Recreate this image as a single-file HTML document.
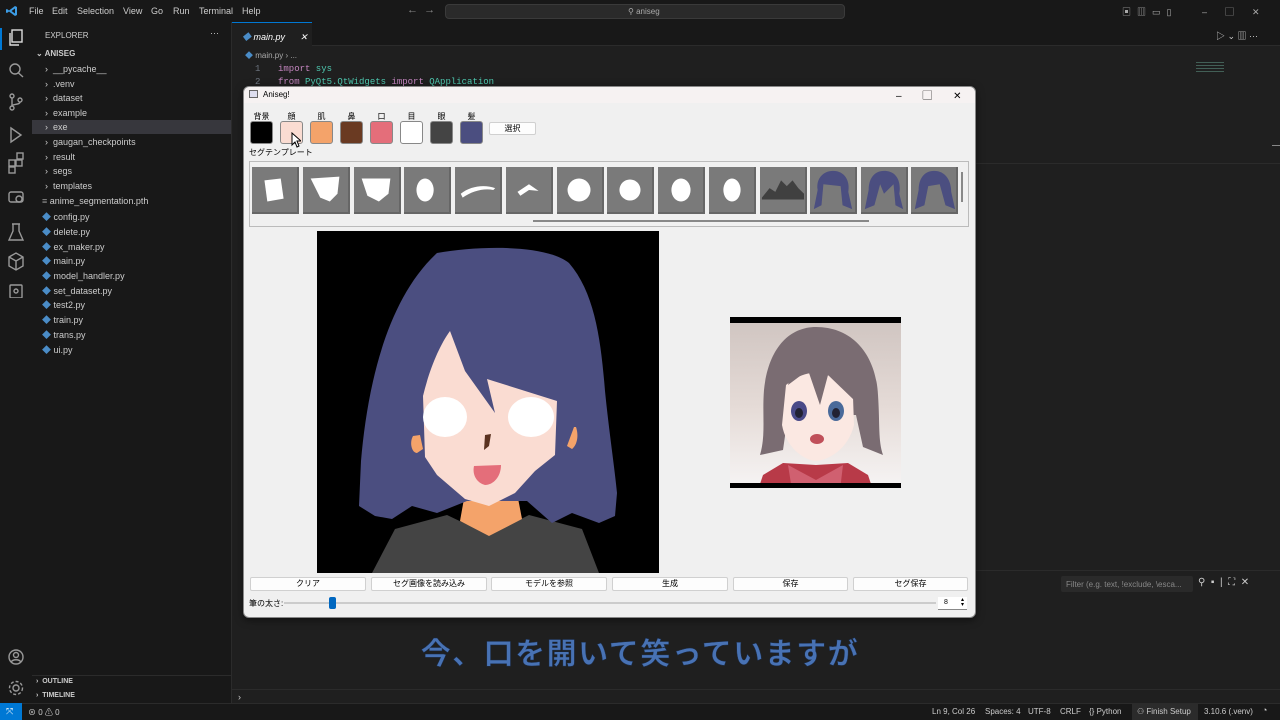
<!DOCTYPE html>
<html><head><meta charset="utf-8"><style>
*{margin:0;padding:0;box-sizing:border-box}
body{width:1280px;height:720px;overflow:hidden;background:#1f1f1f;font-family:"Liberation Sans","Noto Sans CJK JP",sans-serif;position:relative;color:#ccc}
.a{position:absolute}
.t{font-size:9px;color:#cccccc;white-space:nowrap}
.tree div{position:absolute;left:0;font-size:9px;color:#cccccc;white-space:nowrap}
.sw{position:absolute;top:121px;width:23px;height:23px;border-radius:3px;border:1px solid #888}
.lb{position:absolute;top:111px;font-size:8px;color:#000;width:23px;text-align:center}
.th{position:absolute;top:167px;width:47px;height:47px;background:#7a7a7a;border-right:2px solid #666;border-bottom:2px solid #666}
.btn{position:absolute;top:577px;height:14px;background:#fdfdfd;border:1px solid #d0d0d0;border-radius:2px;font-size:8px;color:#000;text-align:center;line-height:12px}
.st{position:absolute;top:707px;font-size:8px;color:#ccc;white-space:nowrap}
</style></head><body>
<div class="a" style="left:0;top:0;width:1280px;height:22px;background:#181818"></div>
<svg class="a" style="left:6px;top:5px" width="12" height="12" viewBox="0 0 12 12"><path d="M9 1 L11 2 V10 L9 11 L3 6.5 L1 8 L0 7.5 V4.5 L1 4 L3 5.5 Z M9 3.5 L5.5 6 L9 8.5Z" fill="#3c9de6"/></svg>
<div class="a t" style="left:29px;top:6px">File</div>
<div class="a t" style="left:52px;top:6px">Edit</div>
<div class="a t" style="left:77px;top:6px">Selection</div>
<div class="a t" style="left:123px;top:6px">View</div>
<div class="a t" style="left:151px;top:6px">Go</div>
<div class="a t" style="left:173px;top:6px">Run</div>
<div class="a t" style="left:199px;top:6px">Terminal</div>
<div class="a t" style="left:242px;top:6px">Help</div>
<div class="a t" style="left:407px;top:4px;font-size:11px;color:#888">← &nbsp;→</div>
<div class="a" style="left:445px;top:4px;width:400px;height:15px;background:#2a2a2a;border:1px solid #3a3a3a;border-radius:4px"></div>
<div class="a t" style="left:628px;top:7px;font-size:8px;color:#aaa">⚲ aniseg</div>
<div class="a t" style="left:1122px;top:5px;color:#aaa;letter-spacing:6px">▣▥▭▯</div>
<div class="a t" style="left:1202px;top:5px;color:#aaa;letter-spacing:18px">–▢✕</div>
<div class="a" style="left:0;top:22px;width:32px;height:681px;background:#181818"></div>
<div class="a" style="left:0;top:28px;width:2px;height:22px;background:#0078d4"></div>
<svg class="a" style="left:7px;top:28px" width="18" height="270" viewBox="0 0 18 270" fill="none" stroke="#999" stroke-width="1.4">
<rect x="5" y="2" width="10" height="12" stroke="#ddd"/><path d="M3 5 V17 H12" stroke="#ddd"/>
<circle cx="8" cy="41" r="5"/><path d="M11.5 45 L16 49"/>
<circle cx="5" cy="68" r="2"/><circle cx="5" cy="80" r="2"/><circle cx="13" cy="72" r="2"/><path d="M5 70V78M13 74C13 77 5 76 5 78"/>
<path d="M4 100 L14 107 L4 114Z"/>
<rect x="2" y="132" width="6" height="6"/><rect x="9" y="132" width="6" height="6"/><rect x="2" y="139" width="6" height="6"/><rect x="10" y="125" width="6" height="6"/>
<rect x="2" y="164" width="14" height="10" rx="2"/><circle cx="12" cy="171" r="3"/>
<path d="M6 196V203L2 212H16L12 203V196M5 196H13"/>
<path d="M2 229L9 225L16 229V238L9 242L2 238Z M2 229L9 233L16 229M9 233V242"/>
<rect x="3" y="257" width="12" height="13" rx="1"/><circle cx="9" cy="263" r="2"/>
</svg>
<svg class="a" style="left:7px;top:648px" width="18" height="50" viewBox="0 0 18 50" fill="none" stroke="#999" stroke-width="1.4"><circle cx="9" cy="9" r="7"/><circle cx="9" cy="7" r="2.5"/><path d="M4 14C6 11 12 11 14 14"/><circle cx="9" cy="40" r="3"/><circle cx="9" cy="40" r="6.5" stroke-dasharray="3 2"/></svg>
<div class="a" style="left:32px;top:22px;width:200px;height:681px;background:#181818;border-right:1px solid #2b2b2b"></div>
<div class="a t" style="left:45px;top:31px;font-size:8px">EXPLORER</div>
<div class="a t" style="left:210px;top:28px">···</div>
<div class="a t" style="left:36px;top:49px;font-size:8px;font-weight:bold">⌄ ANISEG</div>
<div class="a" style="left:32px;top:120px;width:199px;height:14px;background:#37373d"></div>
<div class="tree a" style="left:45px;top:64px;width:180px">
<div style="top:0">›&nbsp; __pycache__</div><div style="top:15px">›&nbsp; .venv</div><div style="top:29px">›&nbsp; dataset</div><div style="top:44px">›&nbsp; example</div><div style="top:58px">›&nbsp; exe</div><div style="top:73px">›&nbsp; gaugan_checkpoints</div><div style="top:88px">›&nbsp; result</div><div style="top:102px">›&nbsp; segs</div><div style="top:117px">›&nbsp; templates</div>
<div style="top:132px;left:-3px"><span style="color:#999">≡</span> anime_segmentation.pth</div>
<div style="top:146px;left:-3px"><span style="color:#4a8cc7">◆</span> config.py</div><div style="top:161px;left:-3px"><span style="color:#4a8cc7">◆</span> delete.py</div><div style="top:176px;left:-3px"><span style="color:#4a8cc7">◆</span> ex_maker.py</div><div style="top:190px;left:-3px"><span style="color:#4a8cc7">◆</span> main.py</div><div style="top:205px;left:-3px"><span style="color:#4a8cc7">◆</span> model_handler.py</div><div style="top:220px;left:-3px"><span style="color:#4a8cc7">◆</span> set_dataset.py</div><div style="top:234px;left:-3px"><span style="color:#4a8cc7">◆</span> test2.py</div><div style="top:249px;left:-3px"><span style="color:#4a8cc7">◆</span> train.py</div><div style="top:264px;left:-3px"><span style="color:#4a8cc7">◆</span> trans.py</div><div style="top:279px;left:-3px"><span style="color:#4a8cc7">◆</span> ui.py</div>
</div>
<div class="a" style="left:32px;top:675px;width:199px;height:1px;background:#2b2b2b"></div>
<div class="a t" style="left:36px;top:678px;font-size:7px;font-weight:bold">›&nbsp; OUTLINE</div>
<div class="a t" style="left:36px;top:692px;font-size:7px;font-weight:bold">›&nbsp; TIMELINE</div>
<div class="a" style="left:232px;top:22px;width:1048px;height:24px;background:#181818;border-bottom:1px solid #2b2b2b"></div>
<div class="a" style="left:232px;top:22px;width:80px;height:24px;background:#1f1f1f;border-top:1px solid #0078d4"></div>
<div class="a t" style="left:242px;top:30px;font-style:italic;color:#fff"><span style="color:#4a8cc7">◆</span> main.py &nbsp;&nbsp;&nbsp;&nbsp;&nbsp;✕</div>
<div class="a t" style="left:1216px;top:29px;color:#ccc">▷ ⌄ ▥ ···</div>
<div class="a t" style="left:245px;top:50px;font-size:8px;color:#aaa"><span style="color:#4a8cc7">◆</span> main.py › ...</div>
<div class="a" style="left:255px;top:63px;font-family:'Liberation Mono',monospace;font-size:9px;line-height:13px;color:#6e7681">1<br>2</div>
<div class="a" style="left:278px;top:63px;font-family:'Liberation Mono',monospace;font-size:9px;line-height:13px;color:#4ec9b0;white-space:nowrap"><span style="color:#c586c0">import</span> sys<br><span style="color:#c586c0">from</span> PyQt5.QtWidgets <span style="color:#c586c0">import</span> QApplication</div>
<div class="a" style="left:1196px;top:62px;width:28px;height:10px;background:repeating-linear-gradient(#5a8a7a 0 1px,transparent 1px 3px);opacity:.6"></div>
<div class="a" style="left:1272px;top:145px;width:8px;height:1px;background:#888"></div>
<div class="a" style="left:975px;top:163px;width:305px;height:1px;background:#2b2b2b"></div>
<div class="a" style="left:975px;top:570px;width:305px;height:1px;background:#2b2b2b"></div>
<div class="a" style="left:1061px;top:576px;width:132px;height:16px;background:#2a2a2a;border-radius:2px"></div>
<div class="a t" style="left:1066px;top:580px;font-size:8px;color:#888">Filter (e.g. text, !exclude, \esca...</div>
<div class="a t" style="left:1198px;top:577px;font-size:10px;color:#ccc">⚲ &nbsp;▪ &nbsp;| &nbsp;⛶ &nbsp;✕</div>
<div class="a" style="left:232px;top:689px;width:1048px;height:1px;background:#2b2b2b"></div>
<div class="a t" style="left:238px;top:692px">›</div>
<div class="a" style="left:0;top:703px;width:1280px;height:17px;background:#181818;border-top:1px solid #2b2b2b"></div>
<div class="a" style="left:0;top:703px;width:22px;height:17px;background:#0078d4"></div>
<div class="a t" style="left:6px;top:706px;color:#fff">⤧</div>
<div class="st" style="left:28px">⊗ 0 ⚠ 0</div>
<div class="st" style="left:932px">Ln 9, Col 26</div>
<div class="st" style="left:985px">Spaces: 4</div>
<div class="st" style="left:1028px">UTF-8</div>
<div class="st" style="left:1060px">CRLF</div>
<div class="st" style="left:1089px">{} Python</div>
<div class="a" style="left:1132px;top:704px;width:66px;height:16px;background:#2b2b2b"></div>
<div class="st" style="left:1137px">⚇ Finish Setup</div>
<div class="st" style="left:1204px">3.10.6 (.venv)</div>
<div class="a t" style="left:1262px;top:705px">◔</div>
<div class="a" style="left:243px;top:86px;width:733px;height:532px;background:#f0f0f0;border:1px solid #888;border-radius:6px;box-shadow:0 2px 8px rgba(0,0,0,.5)"></div>
<div class="a" style="left:244px;top:87px;width:731px;height:16px;background:#f6f2f2;border-radius:6px 6px 0 0"></div>
<div class="a" style="left:249px;top:90px;width:9px;height:8px;border:1px solid #666;background:#dde"></div>
<div class="a" style="left:263px;top:90px;font-size:8px;color:#000">Aniseg!</div>
<div class="a" style="left:896px;top:87px;font-size:10px;color:#000;word-spacing:18px">– ▢ ✕</div>
<div class="lb" style="left:250px">背景</div><div class="lb" style="left:280px">顔</div><div class="lb" style="left:310px">肌</div><div class="lb" style="left:340px">鼻</div><div class="lb" style="left:370px">口</div><div class="lb" style="left:400px">目</div><div class="lb" style="left:430px">眼</div><div class="lb" style="left:460px">髪</div>
<div class="sw" style="left:250px;background:#000"></div>
<div class="sw" style="left:280px;background:#fadcd2"></div>
<div class="sw" style="left:310px;background:#f4a36a"></div>
<div class="sw" style="left:340px;background:#6a3a22"></div>
<div class="sw" style="left:370px;background:#e46e7a"></div>
<div class="sw" style="left:400px;background:#fff"></div>
<div class="sw" style="left:430px;background:#444"></div>
<div class="sw" style="left:460px;background:#4b4e80"></div>
<div class="btn" style="left:489px;top:122px;width:47px;height:13px">選択</div>
<svg class="a" style="left:291px;top:132px" width="10" height="16" viewBox="0 0 10 16"><path d="M1 1V13L4 10L6 15L8 14L6 9H10Z" fill="#fff" stroke="#000" stroke-width="1"/></svg>
<div class="a" style="left:249px;top:147px;font-size:8px;color:#000">セグテンプレート</div>
<div class="a" style="left:249px;top:161px;width:720px;height:66px;border:1px solid #bbb;background:#f0f0f0"></div>
<div id="thumbs"></div>
<div class="a" style="left:533px;top:220px;width:336px;height:2px;background:#888"></div>
<div class="a" style="left:961px;top:172px;width:2px;height:30px;background:#888"></div>
<svg class="a" style="left:317px;top:231px" width="342" height="342" viewBox="0 0 342 342">
<rect width="342" height="342" fill="#000"/>
<path d="M55 342 L78 298 L130 284 L172 304 L212 284 L265 298 L282 342Z" fill="#444444"/>
<path d="M148 262 L200 262 L205 288 L172 305 L143 290Z" fill="#f4a36a"/>
<path d="M120 22 C165 14 230 14 252 32 C278 62 284 110 288 160 C292 200 298 240 300 262 L298 285 L282 292 L255 282 L235 292 L210 270 L150 270 L120 282 L95 275 L75 288 L58 285 L42 275 L44 230 C50 160 68 70 120 22Z" fill="#4b4e80"/>
<path d="M96 205 C92 212 95 222 100 222 L106 218 L103 204Z" fill="#f4a36a"/>
<path d="M257 196 L250 215 L255 218 C260 214 262 205 259 196Z" fill="#f4a36a"/>
<path d="M133 100 L148 140 L178 182 L170 148 L240 170 L238 224 L218 240 L198 262 L172 275 L148 268 L120 244 L108 226 L106 165 C112 140 122 115 133 100Z" fill="#fadcd2"/>
<ellipse cx="128" cy="186" rx="22" ry="20" fill="#fff"/>
<ellipse cx="214" cy="186" rx="23" ry="20" fill="#fff"/>
<path d="M168 204 L174 203 L172 215 L167 219Z" fill="#5a3220"/>
<path d="M157 235 L184 234 C184 246 176 254 168 254 C160 252 155 244 157 235Z" fill="#e46e7a"/>
</svg>
<svg class="a" style="left:730px;top:317px" width="171" height="171" viewBox="2 2 171 171">
<defs><linearGradient id="bg" x1="0" y1="0" x2="0" y2="1"><stop offset="0" stop-color="#cfc4c0"/><stop offset=".55" stop-color="#e6dcd8"/><stop offset="1" stop-color="#f6f4f4"/></linearGradient></defs>
<rect x="2" y="2" width="171" height="171" fill="url(#bg)"/>
<rect x="2" y="2" width="171" height="6" fill="#000"/>
<path d="M35 160 L55 148 L88 150 L120 148 L140 160 L145 175 L30 175Z" fill="#b83a48"/>
<path d="M60 150 L88 165 L115 150 L112 175 L64 175Z" fill="#d06070"/>
<path d="M88 12 C125 12 148 40 150 80 C152 110 150 125 155 140 L135 132 L128 100 L60 100 L55 135 L32 140 C38 120 34 100 36 75 C40 35 60 12 88 12Z" fill="#7a6c72"/>
<path d="M58 70 C70 60 85 55 92 60 C104 58 118 68 125 82 L126 110 C120 135 100 145 88 146 C75 145 58 132 54 110Z" fill="#fbe8e2"/>
<path d="M60 70 L80 55 L92 90 L100 60 L126 85 L120 60 L95 45 L65 50Z" fill="#7a6c72"/>
<ellipse cx="71" cy="96" rx="8" ry="10" fill="#4a4a88"/>
<ellipse cx="108" cy="96" rx="8" ry="10" fill="#4a6a9a"/>
<ellipse cx="71" cy="98" rx="4" ry="5" fill="#223"/>
<ellipse cx="108" cy="98" rx="4" ry="5" fill="#223"/>
<ellipse cx="89" cy="124" rx="7" ry="5" fill="#c0505a"/>
<rect x="2" y="168" width="171" height="5" fill="#000"/>
</svg>
<div class="btn" style="left:250px;width:116px">クリア</div>
<div class="btn" style="left:371px;width:116px">セグ画像を読み込み</div>
<div class="btn" style="left:491px;width:116px">モデルを参照</div>
<div class="btn" style="left:612px;width:116px">生成</div>
<div class="btn" style="left:733px;width:115px">保存</div>
<div class="btn" style="left:853px;width:115px">セグ保存</div>
<div class="a" style="left:249px;top:598px;font-size:8px;color:#000">筆の太さ:</div>
<div class="a" style="left:284px;top:602px;width:652px;height:2px;background:#ccc"></div>
<div class="a" style="left:329px;top:597px;width:7px;height:12px;background:#0067c0;border-radius:2px"></div>
<div class="a" style="left:938px;top:597px;width:29px;height:13px;background:#fff;border-bottom:1px solid #888;font-size:7px;color:#000;padding:2px 0 0 6px">8 <span style="position:absolute;right:3px;top:1px;font-size:6px;line-height:5px">▴<br>▾</span></div>
<div class="a" style="left:0;top:629px;width:1280px;text-align:center;font-size:30px;font-weight:bold;color:#4872b4;letter-spacing:1.5px;-webkit-text-stroke:0.5px #1a2a44;font-family:'Liberation Sans','Noto Sans CJK JP',sans-serif">今、口を開いて笑っていますが</div>
<script>
var h='',xs=[252,303,354,404,455,506,557,607,658,709,760,810,861,911];
var shapes=['<path d="M13 14L30 12L33 33L16 36Z" fill="#fff"/>','<path d="M8 12L38 10L36 28L28 36L18 32Z" fill="#fff"/>','<path d="M8 12L38 12L36 28L26 36L14 30Z" fill="#fff"/>','<ellipse cx="22" cy="24" rx="9" ry="12" fill="#fff"/>','<path d="M6 28C16 20 30 18 42 22L40 24C30 22 18 25 8 32Z" fill="#fff"/>','<path d="M12 26L24 18L34 25L24 24L15 30Z" fill="#fff"/>','<circle cx="23" cy="24" r="12" fill="#fff"/>','<ellipse cx="24" cy="24" rx="11" ry="11" fill="#fff"/>','<ellipse cx="24" cy="24" rx="10" ry="12" fill="#fff"/>','<ellipse cx="24" cy="24" rx="9" ry="12" fill="#fff"/>','<path d="M2 32L10 22L16 26L22 14L28 20L34 14L40 22L46 28L46 34L2 34Z" fill="#404040"/>','<path d="M24 4C36 4 42 14 40 26L44 44L34 40L32 20L14 18L12 40L4 44L8 24C6 12 14 4 24 4Z" fill="#4b4e80"/>','<path d="M24 4C38 4 42 16 40 28L44 44L36 40L34 18L24 28L20 18L14 40L4 44L8 24C8 12 14 4 24 4Z" fill="#4b4e80"/>','<path d="M24 4C36 4 42 14 42 26L46 44L36 40L30 18L18 20L14 40L4 44L8 24C8 12 14 4 24 4Z" fill="#4b4e80"/>'];
for(var i=0;i<14;i++)h+='<svg class="th" style="left:'+xs[i]+'px" viewBox="0 0 47 47">'+shapes[i]+'</svg>';
document.getElementById('thumbs').innerHTML=h;
</script>
</body></html>
